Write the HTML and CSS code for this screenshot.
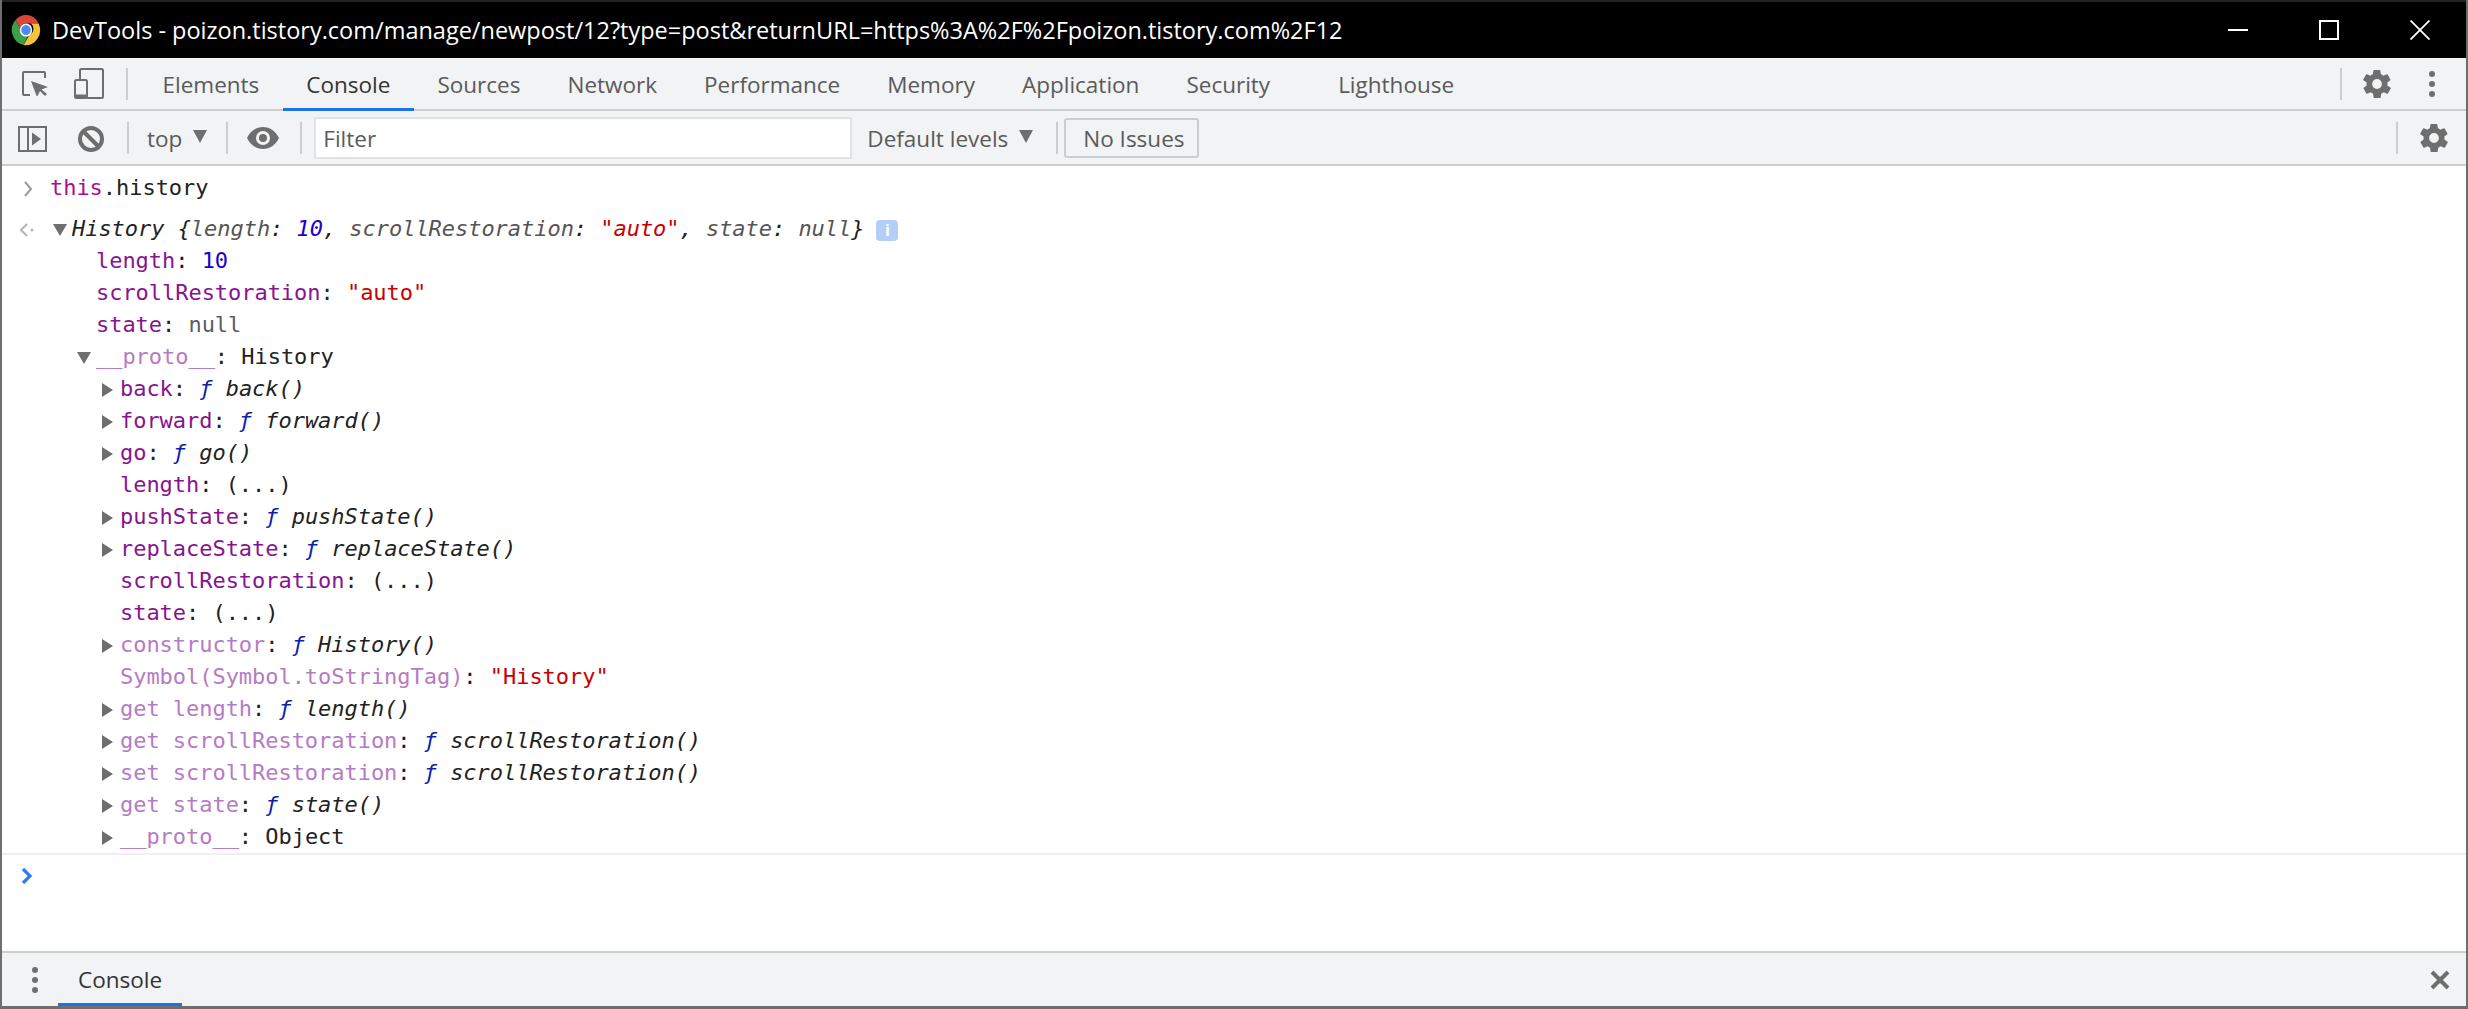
FILE: index.html
```html
<!DOCTYPE html>
<html lang="en">
<head>
<meta charset="utf-8">
<title>DevTools</title>
<link rel="stylesheet" href="styles.css">
</head>
<body>
<div class="window">
  <header class="titlebar">
    <svg class="chrome-logo" width="30" height="32" viewBox="0 0 30 30" preserveAspectRatio="none">
      <path d="M15 1a14 14 0 0 1 12.6 8H15a6 6 0 0 0-5.8 4.4L4.6 5.6A14 14 0 0 1 15 1z" fill="#d9473c"/>
      <path d="M4.6 5.6l6.2 10.8a5.5 5.5 0 0 0 6.6 3.3L12.8 29A14 14 0 0 1 4.6 5.6z" fill="#3f9c4a"/>
      <path d="M27.6 9A14 14 0 0 1 12.8 29l5.6-9.6A6 6 0 0 0 20 9z" fill="#f3c33c"/>
      <circle cx="15" cy="15" r="5.5" fill="#4c8bf0" stroke="#fff" stroke-width="1.4"/>
    </svg>
    <span class="title">DevTools - poizon.tistory.com/manage/newpost/12?type=post&amp;returnURL=https%3A%2F%2Fpoizon.tistory.com%2F12</span>
    <div class="winbtns">
      <svg width="20" height="20" viewBox="0 0 20 20"><path d="M0 10h20" stroke="#fff" stroke-width="2"/></svg>
      <svg width="20" height="20" viewBox="0 0 20 20"><rect x="1" y="1" width="18" height="18" fill="none" stroke="#fff" stroke-width="2"/></svg>
      <svg width="20" height="20" viewBox="0 0 20 20"><path d="M.5.5l19 19M19.500.5l-19 19" stroke="#fff" stroke-width="1.800"/></svg>
    </div>
  </header>

  <nav class="tabbar">
    <svg class="ic-inspect" width="26" height="25" viewBox="0 0 26 25"><path d="M8 24H2a1 1 0 0 1-1-1V2a1 1 0 0 1 1-1h20a1 1 0 0 1 1 1v5" fill="none" stroke="#6e6e6e" stroke-width="2"/><path d="M9 10l17 6-6.500 2.500 5.500 4.500-2 2-5-5-3 6z" fill="#6e6e6e"/></svg>
    <svg class="ic-device" width="30" height="31" viewBox="0 0 30 31"><path d="M6 11V2.500A1.500 1.500 0 0 1 7.500 1h20A1.500 1.500 0 0 1 29 2.500v26a1.500 1.500 0 0 1-1.500 1.500H13" fill="none" stroke="#6e6e6e" stroke-width="2"/><rect x="1" y="12" width="12" height="18" rx="1.500" fill="none" stroke="#6e6e6e" stroke-width="2"/><path d="M1 28h12" stroke="#6e6e6e" stroke-width="3"/></svg>
    <span class="sep sep-tall"></span>
    <div class="tabs">
      <a class="tab">Elements</a>
      <a class="tab active">Console</a>
      <a class="tab">Sources</a>
      <a class="tab">Network</a>
      <a class="tab">Performance</a>
      <a class="tab">Memory</a>
      <a class="tab">Application</a>
      <a class="tab">Security</a>
      <a class="tab tab-last">Lighthouse</a>
    </div>
    <span class="sep sep-tall"></span>
    <svg class="gear gear-top" width="28" height="28" viewBox="2.300 2 19.400 20"><path d="M19.400 13a7.600 7.600 0 0 0 0-2l2.100-1.600a.5.5 0 0 0 .1-.6l-2-3.500a.5.5 0 0 0-.6-.2l-2.500 1a7.300 7.300 0 0 0-1.700-1l-.4-2.700a.5.5 0 0 0-.5-.4h-4a.5.5 0 0 0-.5.4l-.4 2.700a7.300 7.300 0 0 0-1.700 1l-2.500-1a.5.5 0 0 0-.6.2l-2 3.500a.5.5 0 0 0 .1.600L4.600 11a7.600 7.600 0 0 0 0 2l-2.100 1.600a.5.5 0 0 0-.1.6l2 3.500a.5.5 0 0 0 .6.2l2.500-1a7.300 7.300 0 0 0 1.700 1l.4 2.700a.5.5 0 0 0 .5.4h4a.5.5 0 0 0 .5-.4l.4-2.700a7.300 7.300 0 0 0 1.700-1l2.500 1a.5.5 0 0 0 .6-.2l2-3.500a.5.5 0 0 0-.1-.6zM12 15.500a3.500 3.500 0 1 1 0-7 3.500 3.500 0 0 1 0 7z" fill="#6e6e6e"/></svg>
    <svg class="kebab kebab-top" width="6" height="26" viewBox="0 0 6 26"><circle cx="3" cy="3" r="3" fill="#6e6e6e"/><circle cx="3" cy="13" r="3" fill="#6e6e6e"/><circle cx="3" cy="23" r="3" fill="#6e6e6e"/></svg>
  </nav>

  <div class="toolbar">
    <svg class="ic-sidebar" width="29" height="26" viewBox="0 0 29 26"><rect x="1" y="1" width="27" height="24" fill="none" stroke="#6e6e6e" stroke-width="2"/><path d="M10 1v24" stroke="#6e6e6e" stroke-width="2"/><path d="M14 6.500l9 6.500-9 6.500z" fill="#6e6e6e"/></svg>
    <svg class="ic-block" width="26" height="26" viewBox="0 0 26 26"><circle cx="13" cy="13" r="11" fill="none" stroke="#6e6e6e" stroke-width="4"/><path d="M5 5l16 16" stroke="#6e6e6e" stroke-width="4"/></svg>
    <span class="sep"></span>
    <span class="select select-top">top<i class="arrow"></i></span>
    <span class="sep"></span>
    <svg class="ic-eye" width="32" height="22" viewBox="0 0 32 22"><path d="M16 0C9 0 3 4.500 0 11c3 6.500 9 11 16 11s13-4.500 16-11C29 4.500 23 0 16 0zm0 18a7 7 0 1 1 0-14 7 7 0 0 1 0 14zm0-11a4 4 0 1 0 0 8 4 4 0 0 0 0-8z" fill="#6e6e6e"/></svg>
    <span class="sep"></span>
    <div class="filter">Filter</div>
    <span class="select select-levels">Default levels<i class="arrow"></i></span>
    <span class="sep"></span>
    <span class="issues">No Issues</span>
    <span class="spacer"></span>
    <span class="sep"></span>
    <svg class="gear gear-tool" width="28" height="28" viewBox="2.300 2 19.400 20"><path d="M19.400 13a7.600 7.600 0 0 0 0-2l2.100-1.600a.5.5 0 0 0 .1-.6l-2-3.500a.5.5 0 0 0-.6-.2l-2.500 1a7.300 7.300 0 0 0-1.700-1l-.4-2.700a.5.5 0 0 0-.5-.4h-4a.5.5 0 0 0-.5.4l-.4 2.700a7.300 7.300 0 0 0-1.700 1l-2.500-1a.5.5 0 0 0-.6.2l-2 3.500a.5.5 0 0 0 .1.600L4.600 11a7.600 7.600 0 0 0 0 2l-2.100 1.600a.5.5 0 0 0-.1.6l2 3.500a.5.5 0 0 0 .6.2l2.500-1a7.300 7.300 0 0 0 1.700 1l.4 2.700a.5.5 0 0 0 .5.4h4a.5.5 0 0 0 .5-.4l.4-2.700a7.300 7.300 0 0 0 1.700-1l2.500 1a.5.5 0 0 0 .6-.2l2-3.500a.5.5 0 0 0-.1-.6zM12 15.500a3.500 3.500 0 1 1 0-7 3.500 3.500 0 0 1 0 7z" fill="#6e6e6e"/></svg>
  </div>

  <main class="console">
    <div class="log">
      <div class="row row-input"><svg class="gutter-ic" width="10" height="16" viewBox="0 0 10 16"><path d="M2 1l6 7-6 7" fill="none" stroke="#9a9a9a" stroke-width="2"/></svg><span class="kw">this</span>.history</div>
      <div class="row row-result"><svg class="gutter-ic2" width="16" height="14" viewBox="0 0 16 14"><path d="M8 1L2 7l6 6" fill="none" stroke="#b5b5b5" stroke-width="2"/><circle cx="13" cy="7" r="1.500" fill="#b5b5b5"/></svg><i class="tri-down"></i><em class="preview">History {<span class="dim">length</span>: <span class="num">10</span>, <span class="dim">scrollRestoration</span>: <span class="str">"auto"</span>, <span class="dim">state</span>: <span class="dim">null</span>}</em><span class="info">i</span></div>
      <div class="row ind1"><span class="key">length</span>: <span class="num">10</span></div>
      <div class="row ind1"><span class="key">scrollRestoration</span>: <span class="str">"auto"</span></div>
      <div class="row ind1"><span class="key">state</span>: <span class="nul">null</span></div>
      <div class="row ind0"><i class="tri-down"></i><span class="key soft">__proto__</span>: History</div>
      <div class="row ind2"><i class="tri-right"></i><span class="key">back</span>: <em><span class="fn">ƒ</span> back()</em></div>
      <div class="row ind2"><i class="tri-right"></i><span class="key">forward</span>: <em><span class="fn">ƒ</span> forward()</em></div>
      <div class="row ind2"><i class="tri-right"></i><span class="key">go</span>: <em><span class="fn">ƒ</span> go()</em></div>
      <div class="row ind3"><span class="key">length</span>: (...)</div>
      <div class="row ind2"><i class="tri-right"></i><span class="key">pushState</span>: <em><span class="fn">ƒ</span> pushState()</em></div>
      <div class="row ind2"><i class="tri-right"></i><span class="key">replaceState</span>: <em><span class="fn">ƒ</span> replaceState()</em></div>
      <div class="row ind3"><span class="key">scrollRestoration</span>: (...)</div>
      <div class="row ind3"><span class="key">state</span>: (...)</div>
      <div class="row ind2"><i class="tri-right"></i><span class="key soft">constructor</span>: <em><span class="fn">ƒ</span> History()</em></div>
      <div class="row ind3"><span class="key soft">Symbol(Symbol.toStringTag)</span>: <span class="str">"History"</span></div>
      <div class="row ind2"><i class="tri-right"></i><span class="key soft">get length</span>: <em><span class="fn">ƒ</span> length()</em></div>
      <div class="row ind2"><i class="tri-right"></i><span class="key soft">get scrollRestoration</span>: <em><span class="fn">ƒ</span> scrollRestoration()</em></div>
      <div class="row ind2"><i class="tri-right"></i><span class="key soft">set scrollRestoration</span>: <em><span class="fn">ƒ</span> scrollRestoration()</em></div>
      <div class="row ind2"><i class="tri-right"></i><span class="key soft">get state</span>: <em><span class="fn">ƒ</span> state()</em></div>
      <div class="row ind2"><i class="tri-right"></i><span class="key soft">__proto__</span>: Object</div>
    </div>
    <div class="prompt">
      <svg width="12" height="18" viewBox="0 0 12 18"><path d="M2 2l7 7-7 7" fill="none" stroke="#2f7bf0" stroke-width="3.200"/></svg>
    </div>
  </main>

  <footer class="drawer">
    <svg class="kebab kebab-drawer" width="6" height="26" viewBox="0 0 6 26"><circle cx="3" cy="3" r="3" fill="#6e6e6e"/><circle cx="3" cy="13" r="3" fill="#6e6e6e"/><circle cx="3" cy="23" r="3" fill="#6e6e6e"/></svg>
    <a class="drawer-tab">Console</a>
    <span class="spacer"></span>
    <svg class="drawer-close" width="20" height="20" viewBox="0 0 20 20"><path d="M2 2l16 16M18 2L2 18" stroke="#6e6e6e" stroke-width="4"/></svg>
  </footer>
</div>
</body>
</html>
```
FILE: styles.css
```css
* { box-sizing: border-box; }
html, body { margin: 0; height: 100%; overflow: hidden; background: #fff; }
.window {
  height: 1009px;
  display: flex;
  flex-direction: column;
  border-style: solid;
  border-color: #6e6e6e;
  border-width: 0 2px 3px 2px;
  font-family: "Open Sans", "Noto Sans", sans-serif;
}
svg { flex: none; display: block; }

/* title bar */
.titlebar {
  height: 58px;
  flex: none;
  background: #000;
  border-top: 2px solid #222;
  color: #fff;
  display: flex;
  align-items: center;
  padding-left: 9px;
}
.title { margin-left: 11px; font-size: 23.5px; white-space: nowrap; }
.winbtns { margin-left: auto; display: flex; align-items: center; gap: 71px; padding-right: 36px; }

/* tab strip */
.tabbar {
  height: 53px;
  flex: none;
  background: #f1f3f4;
  border-bottom: 2px solid #cbcdcf;
  display: flex;
  align-items: center;
}
.ic-inspect { margin-left: 20px; }
.ic-device { margin-left: 26px; }
.sep { flex: none; width: 2px; height: 32px; background: #cbcdcf; }
.sep-tall { height: 32px; margin-left: 22px; }
.tabs { display: flex; align-self: stretch; flex: 1; }
.tab {
  color: #5a5a5a;
  font-size: 22.5px;
  padding: 3px 23.5px 0;
  display: flex;
  align-items: center;
  margin-bottom: -2px;
  border-bottom: 3px solid transparent;
}
.tab:first-child { margin-left: 11px; }
.tab.active { color: #333; border-bottom-color: #1a73e8; }
.tab-last { margin-left: 21px; }
.gear-top { margin-left: 21px; }
.kebab-top { margin-left: 38px; margin-right: 31px; }

/* console toolbar */
.toolbar {
  height: 55px;
  flex: none;
  background: #f1f3f4;
  border-bottom: 2px solid #cbcdcf;
  display: flex;
  align-items: center;
  color: #5a5a5a;
  font-size: 22.5px;
}
.ic-sidebar { margin: 2px 0 0 16px; }
.ic-block { margin: 2px 23px 0 31px; }
.select { display: flex; align-items: center; padding-top: 2px; }
.select-top { margin: 0 19px 0 18px; }
.select-levels { margin: 0 23px 0 15px; }
.arrow {
  display: inline-block;
  margin-left: 11px;
  margin-bottom: 4px;
  border-left: 7px solid transparent;
  border-right: 7px solid transparent;
  border-top: 13px solid #6e6e6e;
}
.ic-eye { margin: 0 21px 0 19px; }
.filter {
  margin-left: 12px;
  width: 538px;
  height: 42px;
  background: #fff;
  border: 2px solid #e0e2e4;
  padding: 2px 0 0 7px;
  display: flex;
  align-items: center;
}
.issues {
  margin-left: 6px;
  height: 40px;
  padding: 2px 12px 0 17px;
  border: 2px solid #cbcdcf;
  border-radius: 3px;
  display: flex;
  align-items: center;
}
.spacer { flex: 1; }
.gear-tool { margin-left: 22px; margin-right: 18px; }

/* console output */
.console {
  flex: 1;
  background: #fff;
  font-family: "DejaVu Sans Mono", monospace;
  font-size: 22px;
  letter-spacing: -0.04px;
  color: #222;
  display: flex;
  flex-direction: column;
  border-bottom: 2px solid #cbcdcf;
}
.log { padding-top: 6px; border-bottom: 2px solid #f0f0f0; }
.row { height: 32px; line-height: 32px; white-space: nowrap; }
.row svg { display: inline-block; vertical-align: middle; }
.row-input { padding-left: 21px; margin-bottom: 9px; }
.gutter-ic { margin-right: 17px; }
.row-result { padding-left: 17px; }
.gutter-ic2 { margin-right: 18px; }
.ind1 { padding-left: 94px; }
.ind0 { padding-left: 75px; }
.ind2 { padding-left: 100px; }
.ind3 { padding-left: 118px; }
.tri-down {
  display: inline-block;
  vertical-align: middle;
  margin-right: 5px;
  border-left: 7px solid transparent;
  border-right: 7px solid transparent;
  border-top: 12px solid #6e6e6e;
}
.tri-right {
  display: inline-block;
  vertical-align: middle;
  margin-right: 7px;
  border-top: 7px solid transparent;
  border-bottom: 7px solid transparent;
  border-left: 11px solid #6e6e6e;
}
.kw { color: #aa0d91; }
.key { color: #881391; }
.soft { color: #b67bc4; }
.num { color: #1c00cf; }
.str { color: #c80000; }
.nul { color: #5e5e5e; }
.dim { color: #555; }
.fn { color: #0d22aa; }
em { font-style: italic; }
.preview { color: #222; }
.info {
  display: inline-block;
  vertical-align: middle;
  margin-left: 12px;
  width: 22px;
  height: 21px;
  border-radius: 4px;
  background: #b3cff5;
  color: #fff;
  font: bold 16px/21px "Open Sans", sans-serif;
  text-align: center;
}
.prompt { padding: 12px 0 0 19px; }

/* drawer */
.drawer {
  height: 53px;
  flex: none;
  background: #f1f3f4;
  display: flex;
  align-items: center;
}
.kebab-drawer { margin-left: 30px; }
.drawer-tab {
  margin-left: 20px;
  align-self: stretch;
  display: flex;
  align-items: center;
  padding: 3px 20px 0;
  font-size: 22.5px;
  color: #333;
  border-bottom: 3px solid #1a73e8;
}
.drawer-close { margin-right: 16px; }
```
